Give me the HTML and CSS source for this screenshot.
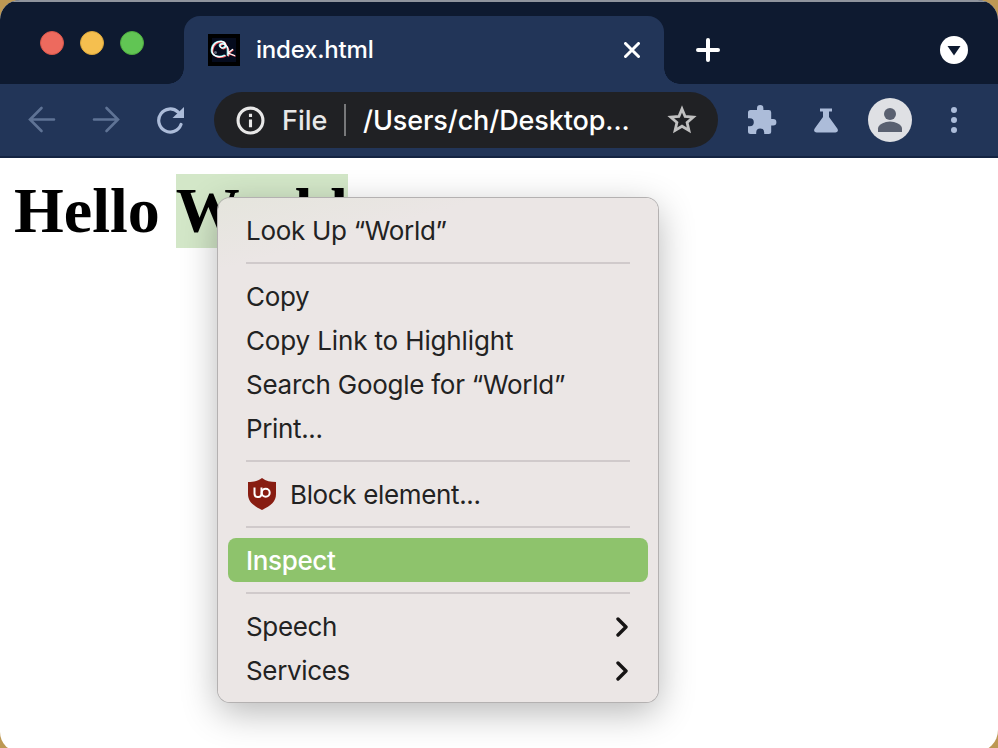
FILE: index.html
```
<!DOCTYPE html>
<html lang="en">
<head>
<meta charset="utf-8">
<title>index.html</title>
<link rel="stylesheet" href="styles.css">
</head>
<body>
<div class="window">
  <header class="tabstrip">
    <div class="lights"><span class="light red"></span><span class="light yellow"></span><span class="light green"></span></div>
    <div class="tab">
      <svg class="favicon" viewBox="0 0 32 32"><path fill="#000" d="M0 0h32v32H0z"/><path fill="#050b1d" d="M4 4h24v24H4z"/><g fill="none" stroke-linecap="round" stroke-linejoin="round"><path stroke="#ee5257" stroke-width="1.3" transform="translate(.7 .6)" d="M17 21.500C10 24.500 3.500 21.500 4 16 4.500 10 9 7 14 7.500c4 .5 5 5.500 1.500 6.500-3 .8-5-3-2-4 3-.8 6 2 6.500 5v6.500M24.500 15.500l-4.500 3.500 6.500 2.500"/><path stroke="#63dde5" stroke-width="1.300" transform="translate(-.7 -.4)" d="M17 21.500C10 24.500 3.500 21.500 4 16 4.500 10 9 7 14 7.500c4 .5 5 5.500 1.500 6.500-3 .8-5-3-2-4 3-.8 6 2 6.500 5v6.500"/><path stroke="#fff" stroke-width="1.3" d="M17 21.500C10 24.500 3.500 21.500 4 16 4.500 10 9 7 14 7.500c4 .5 5 5.500 1.500 6.500-3 .8-5-3-2-4 3-.8 6 2 6.500 5v6.500M24.500 15.500l-4.500 3.500 6.500 2.500"/></g><circle cx="7.500" cy="18.500" r="1.500" fill="#626a7b"/></svg>
      <span class="tab-title">index.html</span>
      <svg class="close" viewBox="0 0 16 16"><path d="m1.5 1.5 13 13m0-13-13 13"/></svg>
    </div>
    <svg class="plus" viewBox="0 0 24 24"><path d="M12 2v20M2 12h20"/></svg>
    <svg class="tab-menu" viewBox="0 0 28 28"><circle cx="14" cy="14" r="14" fill="#fff"/><path fill="#0e1a30" d="M7.5 10h13L14 19.500z"/></svg>
  </header>
  <nav class="toolbar">
    <svg class="back" viewBox="0 0 28 28"><path d="M26 13.500H3M13.500 2 2 13.500 13.500 25"/></svg>
    <svg class="forward" viewBox="0 0 28 28"><path d="M2 13.500h23M14.500 2 26 13.500 14.500 25"/></svg>
    <svg class="reload" viewBox="0 0 28 28"><path fill="none" stroke="#acbcd9" stroke-width="3.2" stroke-linecap="round" d="M25 18.500A11.500 11.500 0 1 1 22 6"/><path fill="#acbcd9" d="M28 1v11H16.500z"/></svg>
    <div class="address">
      <svg class="info" viewBox="0 0 28 28"><circle cx="14" cy="14" r="12" fill="none" stroke="#e8e8e8" stroke-width="3"/><path fill="#e8e8e8" d="M12.500 7.500h3v3h-3zM12.500 13h3v7.500h-3z"/></svg>
      <span class="scheme">File</span><span class="divider"></span><span class="url">/Users/ch/Desktop...</span>
      <svg class="star" viewBox="0 0 30 30"><path d="m15 4 3.100 7.500 8.100.7-6.100 5.300 1.800 7.900-6.900-4.200-6.900 4.200 1.800-7.900-6.100-5.300 8.100-.7z"/></svg>
    </div>
    <svg class="puzzle" viewBox="0 0 29 29"><path fill="#acbcd9" d="M2.500 5H9V3.200a3.200 3.200 0 0 1 6.400 0V5h5.400a2.400 2.400 0 0 1 2.400 2.400V14h2a3.200 3.200 0 0 1 0 6.400h-2v6.100a2.500 2.500 0 0 1-2.500 2.500h-4.500v-1.500a4 4 0 0 0-8 0V29H2.500A2.500 2.500 0 0 1 0 26.500v-5.300h1.800a4 4 0 0 0 0-8H0V7.500A2.500 2.500 0 0 1 2.500 5z"/></svg>
    <svg class="flask" viewBox="0 0 24 25"><path fill="#acbcd9" d="M6 .5h12v3h-3V9l8.300 11.500c1.400 2 .2 4-2 4H2.700c-2.200 0-3.400-2-2-4L9 9V3.500H6z"/></svg>
    <svg class="avatar" viewBox="0 0 44 44"><circle cx="22" cy="22" r="22" fill="#dfe0e4"/><circle cx="22" cy="16" r="6" fill="#5a6070"/><path fill="#5a6070" d="M10 34v-3.500c0-4 7-7 12-7s12 3 12 7V34z"/></svg>
    <svg class="dots" viewBox="0 0 6 26"><circle cx="3" cy="3" r="3"/><circle cx="3" cy="13" r="3"/><circle cx="3" cy="23" r="3"/></svg>
  </nav>
  <main class="page">
    <h1>Hello <span class="selected">World</span></h1>
  </main>
</div>
<div class="menu">
  <div class="item"><span class="lookup">Look Up “World”</span></div>
  <div class="separator"></div>
  <div class="item"><span>Copy</span></div>
  <div class="item"><span class="link">Copy Link to Highlight</span></div>
  <div class="item"><span class="search">Search Google for “World”</span></div>
  <div class="item"><span>Print...</span></div>
  <div class="separator"></div>
  <div class="item"><svg class="shield" viewBox="0 0 30 32"><path fill="#881d12" d="M16 0C12 3 7.500 4 2 4v12c0 7.500 5 11.500 14 16 9-4.500 14-8.500 14-16V4C24.500 4 20 3 16 0z"/><path fill="none" stroke="#fff" stroke-width="2" d="M8.500 9.500v6q0 3.500 3 3.500h1q3 0 3-4V9.500"/><circle cx="19.700" cy="14.800" r="4" fill="none" stroke="#fff" stroke-width="2"/></svg><span>Block element...</span></div>
  <div class="separator"></div>
  <div class="item active"><span>Inspect</span></div>
  <div class="separator"></div>
  <div class="item"><span>Speech</span><svg class="chevron" viewBox="0 0 12 20"><path d="m2 2 8 8-8 8"/></svg></div>
  <div class="item"><span>Services</span><svg class="chevron" viewBox="0 0 12 20"><path d="m2 2 8 8-8 8"/></svg></div>
</div>
</body>
</html>
```
FILE: styles.css
```
* { box-sizing: border-box; }
html, body { margin: 0; height: 748px; overflow: hidden; }
body { background: #bd9853; font-family: Inter, "Liberation Sans", sans-serif; position: relative; }
svg { display: block; flex: none; }
span { white-space: nowrap; }
.window { height: 752px; background: #fff; border-radius: 20px 20px 22px 20px; overflow: hidden; }
.tabstrip { height: 84px; padding-top: 14px; display: flex; background: #0e1a30; border-top: 2px solid #8f949d; }
.lights { display: flex; gap: 16px; padding: 15px 0 0 40px; width: 184px; }
.light { width: 24px; height: 24px; border-radius: 50%; }
.red { background: #ed6a5e; border: 1px solid #d85649; }
.yellow { background: #f5bf4f; border: 1px solid #dca73a; }
.green { background: #61c554; border: 1px solid #4eab3f; }
.tab { width: 480px; height: 68px; background: #223558; border-radius: 16px 16px 0 0; display: flex; align-items: center; padding: 0 24px; position: relative; }
.tab::before, .tab::after { content: ""; position: absolute; bottom: 0; width: 16px; height: 16px; }
.tab::before { left: -16px; background: radial-gradient(circle at 0 0, #0e1a30 15.5px, #223558 16px); }
.tab::after { right: -16px; background: radial-gradient(circle at 100% 0, #0e1a30 15.5px, #223558 16px); }
.favicon { width: 32px; height: 32px; margin-right: 16px; }
.tab-title { color: #fff; font-size: 24px; font-weight: 450; line-height: 30px; letter-spacing: -.2px; flex: 1; }
.close { width: 16px; height: 16px; fill: none; stroke: #fff; stroke-width: 3; stroke-linecap: round; }
.plus { width: 24px; height: 24px; margin: 22px 0 0 32px; fill: none; stroke: #fff; stroke-width: 4; stroke-linecap: round; }
.tab-menu { width: 28px; height: 28px; margin: 20px 30px 0 auto; }
.toolbar { height: 74px; background: #223558; border-bottom: 2px solid #142442; display: flex; align-items: center; padding-left: 28px; }
.back, .forward { width: 28px; height: 28px; fill: none; stroke: #5f7395; stroke-width: 2.6; stroke-linecap: round; }
.forward { margin-left: 36px; }
.reload { width: 28px; height: 28px; margin-left: 36px; }
.address { width: 504px; height: 56px; margin-left: 30px; border-radius: 28px; background: #202124; display: flex; align-items: center; padding-left: 22px; font-size: 27px; font-weight: 450; color: #fff; }
.info { width: 29px; height: 29px; }
.scheme { color: #e8e8e8; width: 46px; margin-left: 17px; }
.divider { width: 2px; height: 32px; background: #77787a; margin-left: 16px; }
.url { width: 267px; margin-left: 17px; letter-spacing: -.1px; }
.star { width: 30px; height: 30px; margin-left: 37px; fill: none; stroke: #c0c0c0; stroke-width: 2.8; }
.puzzle { width: 29px; height: 29px; margin: 0 0 2px 30px; }
.flask { width: 24px; height: 25px; margin-left: 37px; }
.avatar { width: 44px; height: 44px; margin-left: 30px; }
.dots { width: 6px; height: 26px; margin-left: 39px; fill: #acbcd9; }
.page { padding: 16px 14px; }
h1 { margin: 0; font: bold 64px/74px "Liberation Serif", serif; color: #000; }
.selected { background: #d3e7c8; display: inline-block; width: 172px; height: 74px; vertical-align: top; letter-spacing: -.6px; }
.menu { position: absolute; left: 218px; top: 198px; width: 440px; height: 504px; padding: 10px; border-radius: 12px; background: linear-gradient(165deg, #e5e5dd 0, #ebe6e5 70px, #ebe6e5 100%); box-shadow: 0 0 0 1px #b4b1b1, 0 10px 36px rgba(0,0,0,.29); color: #222; font-size: 26px; font-weight: 430; letter-spacing: -.35px; }
.item { height: 44px; padding: 2px 18px 0; display: flex; align-items: center; line-height: 42px; }
.separator { height: 2px; margin: 10px 18px; background: #d0cacb; }
.active { background: #8ec36c; border-radius: 8px; color: #fff; font-weight: 480; }
.lookup { letter-spacing: -.3px; }
.link { letter-spacing: -.14px; }
.search { letter-spacing: -.26px; }
.shield { width: 30px; height: 32px; margin: -2px 14px 0 0; }
.chevron { width: 12px; height: 20px; margin: 0 2px 0 auto; fill: none; stroke: #161414; stroke-width: 3.4; stroke-linecap: round; stroke-linejoin: round; }
```
